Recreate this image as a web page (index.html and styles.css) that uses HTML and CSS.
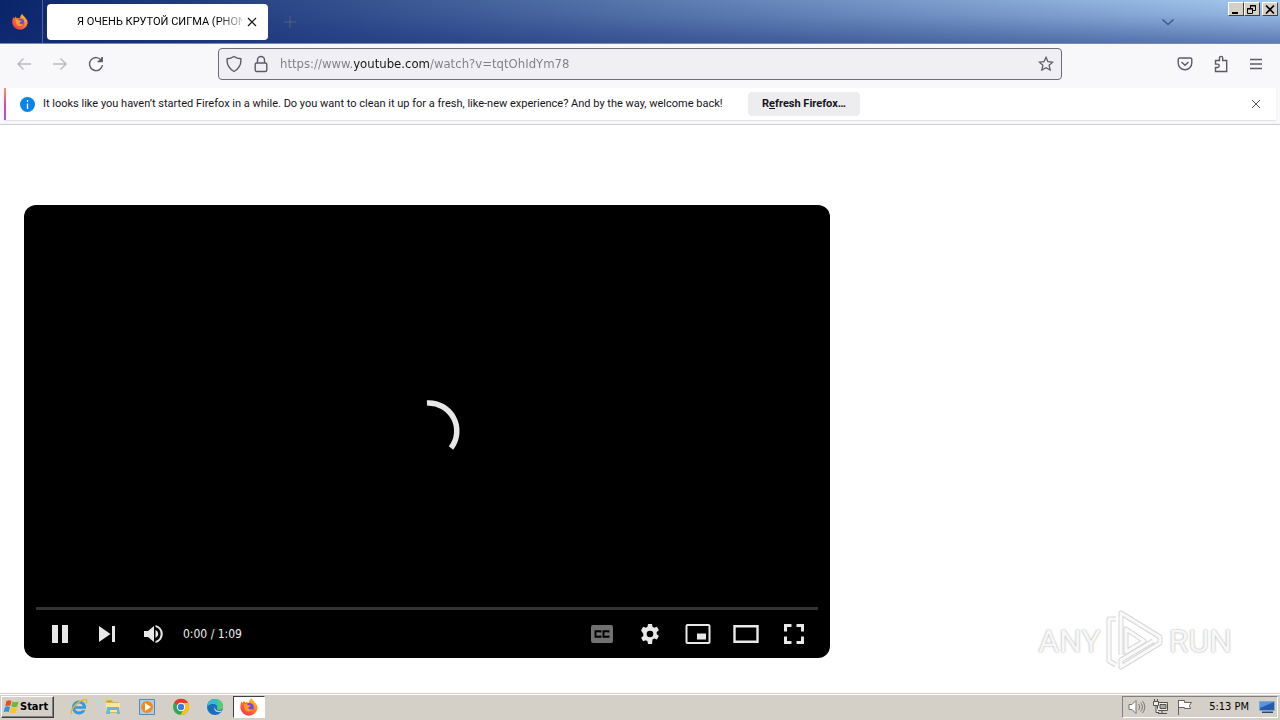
FILE: index.html
```html
<!DOCTYPE html>
<html lang="en">
<head>
<meta charset="utf-8">
<title>Я ОЧЕНЬ КРУТОЙ СИГМА</title>
<link rel="stylesheet" href="styles.css">
</head>
<body>
<svg class="defs" aria-hidden="true">
  <defs>
    <linearGradient id="flame" x1="1" y1="0" x2="0.2" y2="1"><stop offset="0" stop-color="#ffe03a"/><stop offset=".45" stop-color="#ff8420"/><stop offset="1" stop-color="#f5304f"/></linearGradient>
    <symbol id="firefox" viewBox="0 0 16 16">
      <path fill="url(#flame)" d="M1.2 3.2 2.3 4.5 3.6 2.4 4.6 4.2C6 3.6 7 4 8 4.2 8 2.500 9 .9 10.400 0c0 1.600 2.200 2.400 3.200 4.200C15 6 15.800 7 15.600 9.200A7.700 7.700 0 0 1 .4 9.400C.2 7 .5 4.900 1.200 3.200z"/>
      <circle cx="8.300" cy="8.400" r="3.900" fill="#7542e5"/>
      <path fill="#ff9a26" d="M3.600 5.500c1.700-.7 3 .1 4 .9l2 .3c-.3 1.200-1.700 1.100-2.200 2 .2 1.500 2.500 2 4.300.6-.5 3.300-6 4.100-7.600.7z"/>
    </symbol>
  </defs>
</svg>

<header class="titlebar">
  <div class="brand"><svg width="16" height="16"><use href="#firefox"/></svg></div>
  <div class="tab">
    <span class="tab-title">Я ОЧЕНЬ КРУТОЙ СИГМА (PHONK</span>
    <button class="icon-button tab-close" aria-label="Close tab"><svg width="10" height="10" viewBox="0 0 10 10"><path d="M1 1l8 8M9 1L1 9" stroke="#15141a" stroke-width="1.200"/></svg></button>
  </div>
  <button class="icon-button new-tab" aria-label="New tab"><svg width="12" height="12" viewBox="0 0 12 12"><path d="M6 0v12M0 6h12" stroke="#4e6185"/></svg></button>
  <button class="icon-button tab-list" aria-label="List all tabs"><svg width="14" height="8" viewBox="0 0 14 8"><path d="M1.500 1.500L7 6.500l5.500-5" fill="none" stroke="#3f5c8c" stroke-width="1.500"/></svg></button>
  <div class="window-controls">
    <button aria-label="Minimize"><svg width="10" height="9"><path d="M1 7h6v2H1z"/></svg></button>
    <button aria-label="Restore"><svg width="10" height="9" viewBox="0 0 10 9" fill="none" stroke="#000"><path d="M3.500 3V.5h5v5H6M3 1h6M.5 3.500h5v5h-5zM0 4h6"/></svg></button>
    <button class="window-close" aria-label="Close window"><svg width="10" height="9" viewBox="0 0 10 9"><path d="M1 .5l8 8M9 .5l-8 8" stroke="#000" stroke-width="1.600"/></svg></button>
  </div>
</header>

<nav class="toolbar" aria-label="Navigation">
  <div class="nav-buttons">
    <button class="icon-button dim" aria-label="Back"><svg width="16" height="16" viewBox="0 0 16 16"><path d="M15 8H2M7.500 2.500L2 8l5.500 5.500"/></svg></button>
    <button class="icon-button dim" aria-label="Forward"><svg width="16" height="16" viewBox="0 0 16 16"><path d="M1 8h13M8.500 2.500L14 8l-5.500 5.500"/></svg></button>
    <button class="icon-button" aria-label="Reload"><svg width="16" height="16" viewBox="0 0 16 16"><path d="M13.500 4.500A6.500 6.500 0 1 0 14.500 9M9.500 5.500h4.500V1"/><path d="M11.500 5h2.500V2.500z" fill="#5b5b66"/></svg></button>
  </div>
  <div class="address">
    <svg width="16" height="18" viewBox="0 0 16 18"><path d="M8 1.500C6 3 3.500 3.700 1.200 3.700c-.6 5 1.300 9.700 6.800 12.800 5.500-3.100 7.400-7.800 6.800-12.800C12.500 3.700 10 3 8 1.500z"/></svg>
    <svg width="14" height="18" viewBox="0 0 14 18"><rect x="1.200" y="8" width="11.600" height="8.500" rx="1.500"/><path d="M3.500 8V5a3.500 3.500 0 0 1 7 0v3"/></svg>
    <input class="url" type="text" aria-label="Address" value="https://www.youtube.com/watch?v=tqtOhIdYm78">
    <button class="icon-button" aria-label="Bookmark this page"><svg width="16" height="16" viewBox="0 0 18 18"><path d="M9 1.500l2.200 4.800 5.300.6-4 3.500 1.200 5.400L9 13.200l-4.700 2.600 1.200-5.400-4-3.500 5.300-.6z"/></svg></button>
  </div>
  <div class="tools">
    <button class="icon-button" aria-label="Save to Pocket"><svg width="16" height="16" viewBox="0 0 16 16"><path d="M2.500 2h11a1.300 1.300 0 0 1 1.300 1.300V7A6.800 6.800 0 0 1 1.200 7V3.300A1.300 1.300 0 0 1 2.500 2zM4.500 6L8 9.300 11.500 6"/></svg></button>
    <button class="icon-button" aria-label="Extensions"><svg width="16" height="18" viewBox="0 0 16 18"><path d="M2.500 5.500h4V3a1.600 1.600 0 0 1 3.200 0v2.500h4v11H2.500v-4h2a1.700 1.700 0 0 0 0-3.400h-2z"/></svg></button>
    <button class="icon-button" aria-label="Open application menu"><svg width="14" height="12" viewBox="0 0 14 12"><path d="M1 1.500h12M1 6h12M1 10.500h12"/></svg></button>
  </div>
</nav>

<section class="notice">
  <div class="notice-body">
    <svg width="15" height="15" viewBox="0 0 15 15"><circle cx="7.500" cy="7.500" r="7.500" fill="#0a84e8"/><path d="M7.500 3v2M7.500 6.500V12" stroke="#fff" stroke-width="1.300"/></svg>
    <span class="notice-text">It looks like you haven’t started Firefox in a while. Do you want to clean it up for a fresh, like-new experience? And by the way, welcome back!</span>
    <button class="refresh">R<u>e</u>fresh Firefox…</button>
    <button class="icon-button notice-close" aria-label="Dismiss"><svg width="10" height="10" viewBox="0 0 10 10"><path d="M1 1l8 8M9 1L1 9" stroke="#5b5b66"/></svg></button>
  </div>
</section>

<main class="page">
  <section class="player" aria-label="Video player">
    <div class="stage"><svg width="64" height="64" viewBox="0 0 64 64"><path d="M30 6A28 28 0 0 1 54 51" fill="none" stroke="#e8e8e8" stroke-width="5.500"/></svg></div>
    <div class="progress"></div>
    <div class="controls">
      <button class="icon-button" aria-label="Pause"><svg width="18" height="20" viewBox="0 0 18 20"><path d="M1 1h6v18H1zM11 1h6v18h-6z"/></svg></button>
      <button class="icon-button" aria-label="Next"><svg width="18" height="18" viewBox="0 0 18 18"><path d="M1 1l11.500 8L1 17zM14 1h3v16h-3z"/></svg></button>
      <button class="icon-button" aria-label="Mute"><svg width="20" height="20" viewBox="0 0 20 20"><path d="M1 7v6h4l6 5V2L5 7zM12.500 6v8a4.300 4.300 0 0 0 0-8zM12.500 1v2.100a7.200 7.200 0 0 1 0 13.800V19a9.200 9.200 0 0 0 0-18z"/></svg></button>
      <span class="time">0:00 / 1:09</span>
      <button class="icon-button captions" aria-label="Subtitles"><svg width="22" height="18" viewBox="0 0 22 18"><rect width="22" height="18" rx="2" fill="#717171"/><path d="M9.500 7.500V6.200h-5v5.600h5v-1.300M17.500 7.500V6.200h-5v5.600h5v-1.300" fill="none" stroke="#000" stroke-width="1.900"/></svg></button>
      <button class="icon-button" aria-label="Settings"><svg width="20" height="20" viewBox="0 0 20 20"><path fill-rule="evenodd" d="M8 0h4l.5 2.800 1.700 1 2.700-1 2 3.500-2.200 1.800v2l2.200 1.800-2 3.500-2.700-1-1.700 1L12 20H8l-.5-2.800-1.700-1-2.700 1-2-3.500 2.200-1.800v-2L1.100 6.300l2-3.500 2.700 1 1.700-1zM10 6.700a3.300 3.300 0 1 0 0 6.600 3.300 3.300 0 0 0 0-6.600z"/></svg></button>
      <button class="icon-button" aria-label="Miniplayer"><svg width="26" height="20" viewBox="0 0 26 20"><rect x="1.500" y="1" width="23" height="18" rx="1" fill="none" stroke="#e8e8e8" stroke-width="2"/><path d="M12 9.500h9v6h-9z"/></svg></button>
      <button class="icon-button" aria-label="Theater mode"><svg width="26" height="18" viewBox="0 0 26 18"><path d="M1.500 1.200h23v15.600h-23z" fill="none" stroke="#e8e8e8" stroke-width="2.400"/></svg></button>
      <button class="icon-button" aria-label="Full screen"><svg width="20" height="20" viewBox="0 0 20 20"><path d="M7.500 1.500h-6v6M12.500 1.500h6v6M18.500 12.500v6h-6M7.500 18.500h-6v-6" fill="none" stroke="#e8e8e8" stroke-width="3"/></svg></button>
    </div>
  </section>
  <div class="watermark">
    <span>ANY</span>
    <svg width="60" height="64" viewBox="0 0 60 64" fill="none" stroke-linejoin="round"><g stroke="#d6d6d6" stroke-width="5"><path d="M16 46V4l39 24v6L16 58v-7l32-19M11 10H4v42l7 4"/><path d="M21 20v23l18-11z"/></g><g stroke="#fafafa" stroke-width="3"><path d="M16 46V4l39 24v6L16 58v-7l32-19M11 10H4v42l7 4"/><path d="M21 20v23l18-11z"/></g></svg>
    <span>RUN</span>
  </div>
</main>

<footer class="taskbar">
  <button class="start"><svg width="17" height="16" viewBox="0 0 17 16"><path fill="#e94c1d" d="M3.500 2C5.500 1 7 1.300 8.500 2L7.300 7C6 6.300 4.500 6.100 2.300 7z"/><path fill="#70b735" d="M9.500 2.500c1.900 1 3.800 1 6 .1l-1.300 5c-2 .9-4 .8-5.900-.2z"/><path fill="#358fd9" d="M2 8c2-1 3.600-.7 5 .1l-1.200 5C4.400 12.300 3 12.200.8 13z"/><path fill="#ffc222" d="M8 8.500c1.900 1 3.800 1 6 .1l-1.300 5c-2 .9-4 .8-5.900-.2z"/></svg>Start</button>
  <div class="quick">
    <button class="task" aria-label="Internet Explorer"><svg width="18" height="18" viewBox="0 0 18 18" fill="none"><circle cx="9" cy="9.500" r="5.500" stroke="#2d9be0" stroke-width="3"/><path d="M4 9.500h10" stroke="#2d9be0" stroke-width="2.500"/><path d="M12.500 11.500h5" stroke="#d4d0c8" stroke-width="1.500"/><path d="M2 16C-1 13 8 2 15.500 1.500c2 0 1.500 2 .5 4" stroke="#e9b52d" stroke-width="1.500"/></svg></button>
    <button class="task" aria-label="File Explorer"><svg width="18" height="18" viewBox="0 0 18 18"><path fill="#d9b654" d="M2 2h6l1 2h6v11H2z"/><path fill="#f9e59c" d="M2 5h14v9H2z"/><path fill="#59b86b" d="M4 3h3v1H4z"/><path fill="#69b5de" d="M3 9h12l1 7h-3v-4H6v4H2z"/></svg></button>
    <button class="task" aria-label="Media Player"><svg width="18" height="18" viewBox="0 0 18 18"><path fill="#a9cfed" stroke="#528bc0" d="M1.500 1.500h15v15h-15z"/><circle cx="9" cy="9" r="6" fill="#f28b19"/><path fill="#fff" d="M7 5l6 4-6 4z"/></svg></button>
    <button class="task" aria-label="Chrome"><svg width="18" height="18" viewBox="0 0 18 18"><circle cx="9" cy="9" r="8" fill="#35a752"/><path fill="#e33b2e" d="M9 9L2 5a8 8 0 0 1 14 0z"/><path fill="#fbc116" d="M9 5h7a8 8 0 0 1-7.500 12L12 11z"/><circle cx="9" cy="9" r="4.200" fill="#fff"/><circle cx="9" cy="9" r="3.200" fill="#397ee5"/></svg></button>
    <button class="task" aria-label="Edge"><svg width="18" height="18" viewBox="0 0 18 18"><circle cx="9" cy="9" r="8" fill="#176ebd"/><path fill="#35bdd2" d="M1 9a8 8 0 0 1 16 0c0 3-4 4-6 2 1-3-1-5-4-5S1 8 1 9z"/><path fill="#5dcc68" d="M10 1.200c4 .3 7 3.500 7 7.500 0 3-4 4-6 2 3-4 1-7-1-9.500z"/><path fill="#d4d0c8" d="M9 8c-1 3 2 6 7 4.500l-1 1.500c-5 1-8-2-6-6z"/></svg></button>
    <button class="task active" aria-label="Firefox"><svg width="18" height="18"><use href="#firefox"/></svg></button>
  </div>
  <div class="tray">
    <svg width="18" height="16" viewBox="0 0 18 16" fill="#fff" stroke="#77736d"><path d="M1 5.500h3l4-4v13l-4-4H1z"/><path fill="none" d="M10.500 5c1.500 2 1.500 4 0 6M12.500 3.500c2.500 3 2.500 6 0 9M14.500 2c3 4 3 8 0 12"/></svg>
    <svg width="18" height="16" viewBox="0 0 18 16" fill="#eee" stroke="#55524e"><path d="M5.500 3.500h10v8h-10z"/><path fill="#aaa" d="M8 5.500h6v4H8z"/><path d="M10 12v2M6 14.500h9M1.500 2.500h5v4h-5zM4 6.500v7h3M2.500 0v2M5.500 0v2"/></svg>
    <svg width="18" height="16" viewBox="0 0 18 16" fill="#fff" stroke="#66625c"><path d="M2.500 1v15M2.500 1.500h6v2h7l-2 3 1 3h-6v-1h-6"/></svg>
    <span class="clock">5:13 PM</span>
    <svg width="16" height="16" viewBox="0 0 16 16"><path fill="#235cae" stroke="#8aa5c4" d="M.5 2.500h15v9H.5z"/><path fill="#5996e0" d="M1 3h14L1 9z"/><path fill="#28486e" d="M3 12.500h11V14H3z"/></svg>
  </div>
</footer>
</body>
</html>
```
FILE: styles.css
```css
* { box-sizing: border-box; }

body {
  margin: 0;
  min-height: 100vh;
  display: flex;
  flex-direction: column;
  background: #fff;
  color: #15141a;
  font: 11px/16px Roboto, "DejaVu Sans", sans-serif;
}

button {
  margin: 0;
  font: inherit;
  color: inherit;
}

svg { display: block; flex: none; }
.defs { position: absolute; width: 0; height: 0; }

.icon-button {
  display: flex;
  align-items: center;
  justify-content: center;
  padding: 0;
  border: 0;
  background: none;
}

.titlebar {
  display: flex;
  height: 44px;
  background:
    linear-gradient(rgba(20, 40, 110, 0), rgba(20, 45, 120, .12) 35%, rgba(20, 45, 120, .5)),
    linear-gradient(90deg, #0a246a, #a6caf0);
  border-bottom: 1px solid #7a8cad;
}

.brand {
  display: flex;
  align-items: center;
  justify-content: center;
  width: 43px;
  padding-right: 2px;
  border-right: 1px solid #4a619a;
}

.tab {
  display: flex;
  align-items: center;
  width: 221px;
  margin: 4px 0 3px 4px;
  padding: 0 10px 0 30px;
  border-radius: 4px;
  background: #fff;
}

.tab-title {
  flex: 1;
  overflow: hidden;
  white-space: nowrap;
  color: #000;
  -webkit-mask-image: linear-gradient(90deg, #000 85%, rgba(0, 0, 0, .2));
  mask-image: linear-gradient(90deg, #000 85%, rgba(0, 0, 0, .2));
}

.tab-close { width: 12px; margin-left: 4px; }
.new-tab { width: 44px; }
.tab-list { width: 24px; margin-left: auto; }

.window-controls {
  display: flex;
  align-items: flex-start;
  margin-left: 48px;
  padding: 2px 2px 0 0;
}

.window-controls button {
  display: flex;
  align-items: center;
  justify-content: center;
  width: 16px;
  height: 14px;
  padding: 0;
  border: 1px solid;
  border-color: #fff #404040 #404040 #fff;
  background: #d4d0c8;
}

.window-controls .window-close { margin-left: 2px; }

.toolbar {
  display: grid;
  grid-template-columns: 1fr minmax(0, 844px) 1fr;
  align-items: center;
  height: 44px;
  padding-top: 4px;
  padding-bottom: 8px;
  background: #f8f8fb;
}

.toolbar svg {
  fill: none;
  stroke: #5b5b66;
  stroke-width: 1.4;
}

.nav-buttons { display: flex; gap: 20px; padding-left: 16px; }
.dim { opacity: .4; }

.address {
  display: flex;
  align-items: center;
  height: 32px;
  padding: 0 7px;
  gap: 12px;
  border: 1px solid #6d6d76;
  border-radius: 4px;
  background: #f0f0f4;
}

.url {
  flex: 1;
  min-width: 0;
  padding: 0;
  border: 0;
  outline: 0;
  font: 13px/20px "DejaVu Sans Condensed", "DejaVu Sans", sans-serif;
  color: transparent;
  background: linear-gradient(90deg, #7d7d86 74px, #15141a 74px 150px, #7d7d86 150px);
  -webkit-background-clip: text;
  background-clip: text;
}

.tools { display: flex; justify-content: flex-end; gap: 20px; padding-right: 17px; }

.notice {
  height: 37px;
  padding-right: 4px;
  padding-left: 4px;
  background: #f8f8fb;
  border-bottom: 1px solid #cccccf;
}

.notice-body {
  display: flex;
  align-items: center;
  height: 32px;
  padding-right: 15px;
  padding-left: 14px;
  border-left: 2px solid;
  border-image: linear-gradient(#ff9a66, #e846a0, #9059ff) 1;
  background: #fff;
  box-shadow: 0 1px 1px #e4e4e8;
}

.notice-text { min-width: 684px; margin-left: 8px; white-space: nowrap; }

.refresh {
  width: 112px;
  height: 24px;
  margin-left: 21px;
  padding: 0;
  border: 0;
  border-radius: 4px;
  background: #ededf0;
  font-weight: bold;
}

.notice-close { margin-left: auto; }

.page {
  position: relative;
  flex: 1;
  padding: 80px 24px 35px;
}

.player {
  display: flex;
  flex-direction: column;
  width: 66%;
  min-width: 480px;
  max-width: 806px;
  height: 100%;
  border-radius: 12px;
  background: #000;
  color: #eee;
}

.stage {
  display: flex;
  align-items: center;
  justify-content: center;
  min-height: 402px;
  padding-top: 46px;
  padding-left: 4px;
}

.progress { height: 3px; margin: 0 12px; background: #333; }

.controls {
  display: flex;
  align-items: center;
  height: 48px;
  padding: 0 12px;
  fill: #e8e8e8;
}

.controls .icon-button { width: 48px; }
.controls .icon-button:nth-child(2) { width: 45px; }
.time { margin-left: 6px; font: 12px/16px "DejaVu Sans Condensed", "DejaVu Sans", sans-serif; }
.controls .captions { margin-left: auto; }

.watermark {
  position: absolute;
  right: 48px;
  bottom: 20px;
  display: flex;
  align-items: center;
  gap: 4px;
  font: 32px/64px Roboto, "Liberation Sans", sans-serif;
  color: #f7f7f7;
  text-shadow: 0 0 2px #999;
}

.taskbar {
  display: flex;
  align-items: center;
  height: 28px;
  padding: 1px 2px 3px 1px;
  border-top: 1px solid #d4d0c8;
  background: #d4d0c8;
  box-shadow: inset 0 1px #fff;
  color: #000;
}

.start {
  display: flex;
  align-items: center;
  width: 53px;
  height: 22px;
  padding: 0 1px;
  border: 1px solid;
  border-color: #fff #404040 #404040 #fff;
  background: #d4d0c8;
  box-shadow: inset -1px -1px #808080;
  font: bold 11px/16px "DejaVu Sans Condensed", "DejaVu Sans", sans-serif;
}

.quick { display: flex; gap: 2px; margin-left: 9px; }

.task {
  display: flex;
  align-items: center;
  justify-content: center;
  width: 32px;
  height: 22px;
  padding: 0;
  border: 1px solid transparent;
  background: none;
}

.task.active {
  border-color: #404040 #fff #fff #404040;
  background: #fff;
}

.tray {
  display: flex;
  align-items: center;
  gap: 6px;
  height: 22px;
  margin-left: auto;
  padding: 0 2px 0 5px;
  border: 1px solid;
  border-color: #808080 #fff #fff #808080;
}

.clock {
  margin: 0 4px 0 9px;
  white-space: nowrap;
  font: 11px/16px "DejaVu Sans Condensed", "DejaVu Sans", sans-serif;
}
```
